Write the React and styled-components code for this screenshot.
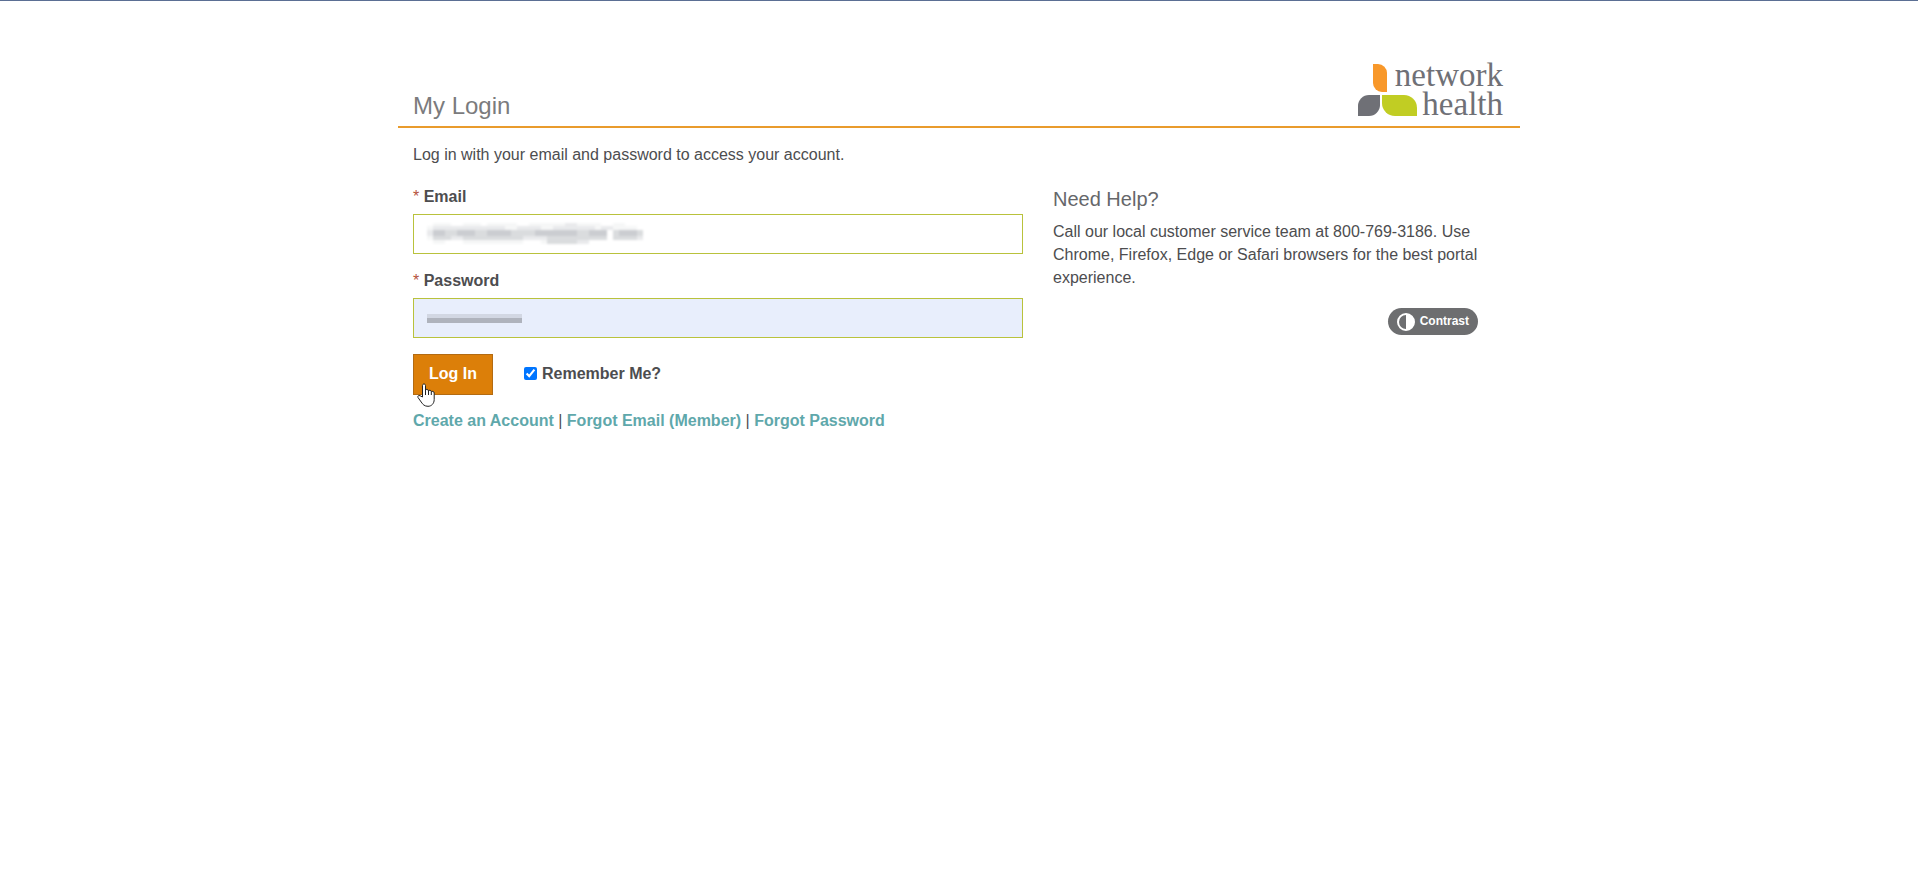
import React, { useState } from "react";
import styled, { createGlobalStyle } from "styled-components";

const EMAIL_ROWS = [
  { y: 0, h: 3, cells: "011100111011111001111112211110011000" },
  { y: 3, h: 4, cells: "122222222222211222211222222212211110" },
  { y: 7, h: 6, cells: "244334443344443333444444433444034443" },
  { y: 13, h: 4, cells: "133322333333333322223333333333033332" },
  { y: 17, h: 4, cells: "011000111111111100013333322000000000" },
];

const SHADES = ["#ffffff", "#f6f7f7", "#e9eaec", "#dadcde", "#cbcdd1"];

const App = () => {
  const [email, setEmail] = useState("");
  const [password, setPassword] = useState("");
  const [remember, setRemember] = useState(true);

  return (
    <>
      <GlobalStyle />
      <Page>
        <Header>
          <Title>My Login</Title>
          <Logo />
        </Header>
        <Intro>Log in with your email and password to access your account.</Intro>
        <Columns>
          <Form onSubmit={(e) => e.preventDefault()}>
            <Label htmlFor="email">
              <Required>*</Required> Email
            </Label>
            <Field>
              <Input
                id="email"
                type="email"
                value={email}
                onChange={(e) => setEmail(e.target.value)}
              />
              {!email && <EmailMask />}
            </Field>
            <Label htmlFor="password">
              <Required>*</Required> Password
            </Label>
            <Field>
              <Input
                id="password"
                type="password"
                $filled
                value={password}
                onChange={(e) => setPassword(e.target.value)}
              />
              {!password && <PasswordMask />}
            </Field>
            <Actions>
              <LoginButton type="submit">
                Log In
                <Pointer />
              </LoginButton>
              <Remember htmlFor="remember">
                <Checkbox
                  id="remember"
                  type="checkbox"
                  checked={remember}
                  onChange={(e) => setRemember(e.target.checked)}
                />
                Remember Me?
              </Remember>
            </Actions>
            <Links>
              <Link href="#create">Create an Account</Link> |{" "}
              <Link href="#email">Forgot Email (Member)</Link> |{" "}
              <Link href="#password">Forgot Password</Link>
            </Links>
          </Form>
          <Help>
            <HelpTitle>Need Help?</HelpTitle>
            <HelpText>
              Call our local customer service team at 800-769-3186. Use Chrome,
              Firefox, Edge or Safari browsers for the best portal experience.
            </HelpText>
            <ContrastButton type="button">
              <ContrastIcon />
              Contrast
            </ContrastButton>
          </Help>
        </Columns>
      </Page>
    </>
  );
};

const Logo = () => (
  <LogoSvg viewBox="0 0 146 56" role="img" aria-label="network health">
    <path d="M15 2h5a9 9 0 0 1 9 9v19h-5a9 9 0 0 1-9-9z" fill="#f8982a" />
    <path d="M11 33h11v10a11 11 0 0 1-11 11H0V44a11 11 0 0 1 11-11z" fill="#6f7076" />
    <path d="M24 33h22a13 13 0 0 1 13 13v8H37a13 13 0 0 1-13-13z" fill="#c1cd23" />
    <LogoText x="145" y="24">network</LogoText>
    <LogoText x="145" y="53">health</LogoText>
  </LogoSvg>
);

const EmailMask = () => (
  <EmailMaskSvg viewBox="0 0 216 21" aria-hidden="true">
    {EMAIL_ROWS.map((row) =>
      row.cells.split("").map((c, i) => (
        <rect
          key={`${row.y}-${i}`}
          x={i * 6}
          y={row.y}
          width="6"
          height={row.h}
          fill={SHADES[c]}
        />
      ))
    )}
  </EmailMaskSvg>
);

const Pointer = () => (
  <PointerSvg viewBox="0 0 18 24" aria-hidden="true">
    <path
      d="M5.500 14V2.500C5.500.5 8.500.5 8.500 2.500V7C9 6 11.500 6.200 11.500 8 12 6.700 14.300 7 14.300 8.800 15 7.800 17.200 8.300 17.200 10V16.500C17.200 20.500 14.500 23.300 11 23.300 7.500 23.300 5.800 21.500 4.200 19L1 14.500C.3 13.200 1.600 12 3 12.700z"
      fill="#fff"
      stroke="#222"
    />
    <path d="M8.500 7v5M11.500 8V12M14.300 9V12" fill="none" stroke="#222" />
  </PointerSvg>
);

const ContrastIcon = () => (
  <ContrastSvg viewBox="0 0 18 18" aria-hidden="true">
    <circle cx="9" cy="9" r="8" fill="none" stroke="#fff" strokeWidth="2" />
    <path d="M9 1a8 8 0 0 1 0 16z" fill="#fff" />
  </ContrastSvg>
);

export default App;

const GlobalStyle = createGlobalStyle`
  * {
    box-sizing: border-box;
  }
  body {
    margin: 0;
    border-top: 1px solid #5b6f94;
    background: #fff;
    color: #4d4d4f;
    font-family: "Liberation Sans", Arial, sans-serif;
    font-size: 16px;
    line-height: 23px;
  }
`;
const Page = styled.main`
  max-width: 1122px;
  margin: 0 auto;
  padding-top: 61px;
`;
const Header = styled.header`
  display: flex;
  align-items: flex-end;
  justify-content: space-between;
  padding: 0 16px 8px 15px;
  border-bottom: 2px solid #e99b2c;
`;
const Title = styled.h1`
  margin: 0;
  color: #7b7b7d;
  font-size: 24px;
  font-weight: 400;
  line-height: 24px;
`;
const LogoSvg = styled.svg`
  width: 146px;
  height: 56px;
  overflow: visible;
`;
const LogoText = styled.text`
  fill: #6f7076;
  font-family: "Liberation Serif", "Times New Roman", serif;
  font-size: 33px;
  text-anchor: end;
`;
const Intro = styled.p`
  margin: 15px 15px 19px;
`;
const Columns = styled.div`
  display: flex;
  gap: 30px;
  padding: 0 15px;
`;
const Form = styled.form`
  flex: 0 1 610px;
`;
const Label = styled.label`
  display: block;
  margin-bottom: 5px;
  font-weight: 700;
  line-height: 24px;
`;
const Required = styled.span`
  color: #b5523b;
  font-weight: 400;
`;
const Field = styled.div`
  position: relative;
  margin-bottom: 15px;
`;
const Input = styled.input`
  display: block;
  width: 100%;
  height: 40px;
  padding: 0 14px;
  border: 1px solid #b9c23c;
  background: ${({ $filled }) => ($filled ? "#e8eefc" : "#fff")};
  color: inherit;
  font: inherit;
`;
const EmailMaskSvg = styled.svg`
  position: absolute;
  top: 9px;
  left: 14px;
  width: 216px;
  height: 21px;
  filter: blur(1px);
  pointer-events: none;
`;
const PasswordMask = styled.span`
  position: absolute;
  top: 16px;
  left: 14px;
  width: 95px;
  height: 9px;
  background: linear-gradient(#d2d7e3 4px, #afb3bd 4px);
  pointer-events: none;
`;
const Actions = styled.div`
  display: flex;
  align-items: center;
  gap: 31px;
  padding-top: 1px;
`;
const LoginButton = styled.button`
  position: relative;
  height: 41px;
  padding: 0 15px 2px;
  border: 1px solid #b36b12;
  background: #dc7f09;
  color: #fff;
  font: inherit;
  font-weight: 700;
`;
const PointerSvg = styled.svg`
  position: absolute;
  top: 28px;
  left: 3px;
  width: 18px;
  height: 24px;
`;
const Remember = styled.label`
  display: flex;
  align-items: center;
  gap: 5px;
  padding-bottom: 2px;
  font-weight: 700;
`;
const Checkbox = styled.input`
  width: 13px;
  height: 13px;
  margin: 0;
`;
const Links = styled.p`
  margin: 14px 0 0;
`;
const Link = styled.a`
  color: #5fa8ab;
  font-weight: 700;
  text-decoration: none;
`;
const Help = styled.aside`
  display: flex;
  flex: 0 1 425px;
  flex-direction: column;
`;
const HelpTitle = styled.h2`
  margin: 0 0 7px;
  color: #66676a;
  font-size: 20px;
  font-weight: 400;
  line-height: 28px;
`;
const HelpText = styled.p`
  margin: 0 0 19px;
`;
const ContrastButton = styled.button`
  display: flex;
  align-items: center;
  align-self: flex-end;
  gap: 5px;
  height: 27px;
  padding: 0 9px;
  border: 0;
  border-radius: 14px;
  background: #6d6e70;
  color: #fff;
  font: inherit;
  font-size: 12px;
  font-weight: 700;
`;
const ContrastSvg = styled.svg`
  width: 18px;
  height: 18px;
`;
